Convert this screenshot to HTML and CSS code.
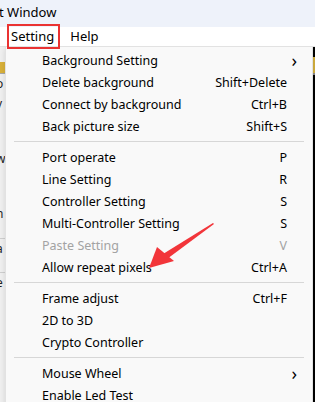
FILE: index.html
```html
<!DOCTYPE html>
<html lang="en">
<head>
    <meta charset="UTF-8">
    <meta name="viewport" content="width=device-width, initial-scale=1.0">
    <title>Setting Menu</title>
    <link rel="stylesheet" href="styles.css">
</head>
<body>
    <div class="window">
        <div class="titlebar">t Window</div>
        <div class="menubar">
            <span class="menu-title active">Setting</span>
            <span class="menu-title">Help</span>
        </div>
        <div class="workspace">
            <div class="side-panel">
                <div class="side-tab"></div>
                <div class="side-line">o</div>
                <div class="side-line">v</div>
                <div class="side-line gap">w</div>
                <div class="side-line gap">n</div>
                <div class="side-line boxed">a</div>
                <div class="side-line boxed">e</div>
            </div>
            <div class="canvas"></div>
            <div class="screen">
                <div class="screen-tab"></div>
                <div class="marks">
                    <span></span><span></span><span></span><span></span><span></span>
                </div>
            </div>
        </div>

        <!-- popup menu opened from "Setting" -->
        <div class="popup">
            <div class="item"><span>Background Setting</span><span class="arrow">&#8250;</span></div>
            <div class="item"><span>Delete background</span><span class="key">Shift+Delete</span></div>
            <div class="item"><span>Connect by background</span><span class="key">Ctrl+B</span></div>
            <div class="item"><span>Back picture size</span><span class="key">Shift+S</span></div>
            <div class="sep"></div>
            <div class="item"><span>Port operate</span><span class="key">P</span></div>
            <div class="item"><span>Line Setting</span><span class="key">R</span></div>
            <div class="item"><span>Controller Setting</span><span class="key">S</span></div>
            <div class="item"><span>Multi-Controller Setting</span><span class="key">S</span></div>
            <div class="item disabled"><span>Paste Setting</span><span class="key">V</span></div>
            <div class="item"><span>Allow repeat pixels</span><span class="key">Ctrl+A</span></div>
            <div class="sep"></div>
            <div class="item"><span>Frame adjust</span><span class="key">Ctrl+F</span></div>
            <div class="item"><span>2D to 3D</span></div>
            <div class="item"><span>Crypto Controller</span></div>
            <div class="sep"></div>
            <div class="item"><span>Mouse Wheel</span><span class="arrow">&#8250;</span></div>
            <div class="item"><span>Enable Led Test</span></div>
        </div>

        <svg class="pointer" width="315" height="402" viewBox="0 0 315 402">
            <polygon points="213,223 163,254 167,259 214,224" fill="#f2353a"/>
            <polygon points="149,268 157,247 174,261" fill="#f2353a"/>
        </svg>
    </div>
</body>
</html>
```

FILE: styles.css
```css
* {
    box-sizing: border-box;
    margin: 0;
    padding: 0;
}

body {
    font-family: 'Noto Sans', 'Liberation Sans', sans-serif;
    font-size: 12.5px;
    color: #000;
    background-color: #fff;
}

.window {
    position: relative;
    width: 315px;
    height: 402px;
    overflow: hidden;
}

.titlebar {
    height: 27px;
    background-color: #eef2fa;
    line-height: 25px;
    font-size: 13px;
    margin-left: -1px;
}

.menubar {
    height: 19px;
    display: flex;
    align-items: center;
    gap: 5px;
    padding-left: 7px;
    background-color: #fff;
    font-size: 13px;
    position: relative;
    z-index: 2;
}

.menu-title {
    padding: 0 3px;
    line-height: 21px;
    border: 2px solid transparent;
}

.menu-title.active {
    border-color: #ea3232;
    padding: 0 4px 0 2px;
}

.workspace {
    display: flex;
    height: 356px;
    border-top: 1px solid #e4e4e4;
}

.side-panel {
    width: 6px;
    background-color: #f0f0f0;
    border-right: 1px solid #dcdcdc;
    overflow: hidden;
}

.side-tab {
    height: 12px;
    margin-top: 15px;
    background-color: #d9b13a;
    border-bottom: 1px solid #a8a8a8;
}

.side-line {
    height: 20px;
    line-height: 20px;
    margin-left: -4px;
    font-size: 12px;
    color: #222;
}

.side-line:first-of-type {
    margin-top: 12px;
}

.side-line.gap {
    margin-top: 35px;
}

.side-line.boxed {
    margin-top: 14px;
    border-top: 1px solid #cfcfcf;
}

.canvas {
    flex: 1;
    background-color: #fff;
}

.screen {
    width: 4px;
    background-color: #000;
}

.screen-tab {
    height: 18px;
    margin-top: 10px;
    background-color: #d4b03f;
    border-bottom: 2px solid #8a8a8a;
}

.marks {
    display: flex;
    flex-direction: column;
    gap: 26px;
    padding-top: 25px;
}

.marks span {
    display: block;
    width: 2px;
    height: 5px;
    background-color: #f0262b;
}

.popup {
    position: absolute;
    left: 5px;
    top: 46px;
    width: 308px;
    padding-top: 2px;
    background-color: #f9f9f9;
    border: 1px solid #e2e2e2;
    box-shadow: 0 2px 6px rgba(0, 0, 0, 0.12);
}

.item {
    height: 22px;
    display: flex;
    align-items: center;
    justify-content: space-between;
    padding-left: 36px;
    padding-right: 25px;
    white-space: nowrap;
}

.item.disabled {
    color: #a3a3a3;
}

.arrow {
    font-size: 18px;
    margin-right: -10px;
    line-height: 18px;
}

.sep {
    height: 1px;
    margin: 4px 8px;
    background-color: #d7d7d7;
}

.pointer {
    position: absolute;
    left: 0;
    top: 0;
    pointer-events: none;
}
```
